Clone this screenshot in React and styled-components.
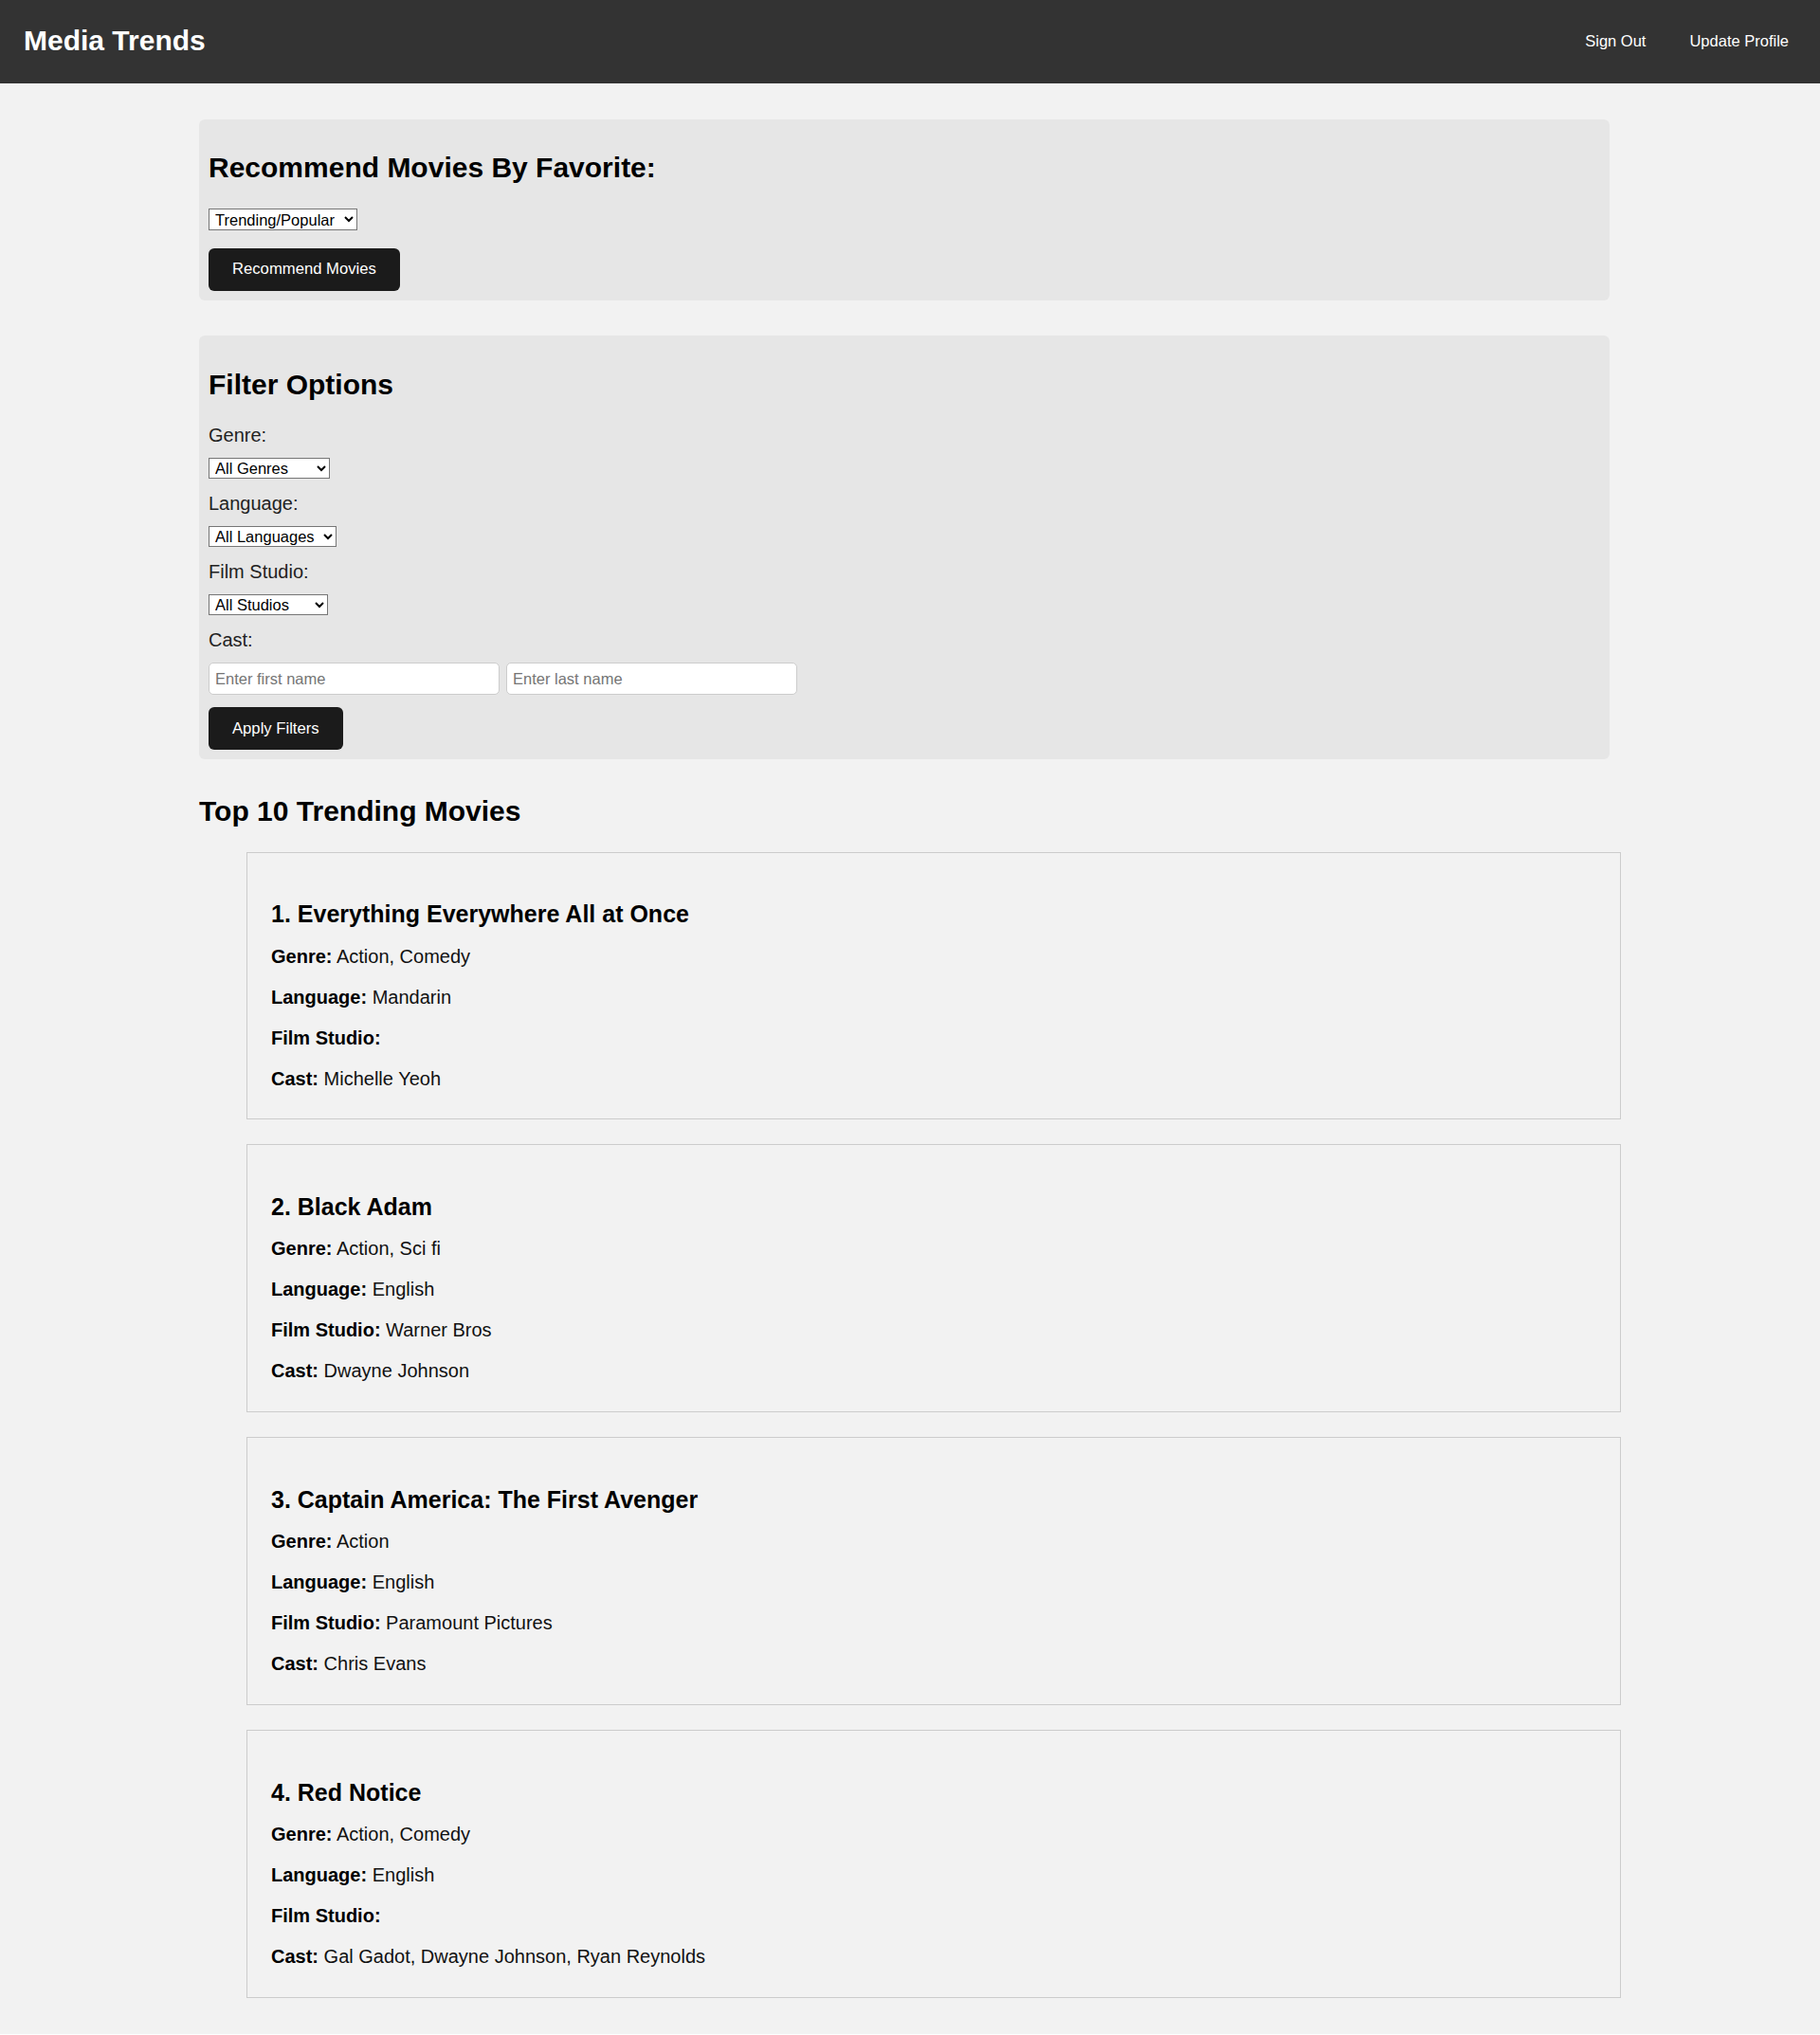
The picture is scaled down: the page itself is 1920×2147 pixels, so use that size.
import styled, { createGlobalStyle } from "styled-components";

const GlobalStyle = createGlobalStyle`
  html {
    background: #fff;
  }
  body {
    margin: 0;
    background: #f2f2f2;
    font-family: "Liberation Sans", Arial, sans-serif;
    color: #000;
  }
`;

const Header = styled.header`
  height: 88px;
  box-sizing: border-box;
  display: flex;
  align-items: center;
  justify-content: space-between;
  padding: 0 33px 2px 25px;
  background: #333;
  color: #fff;
`;

const Brand = styled.h1`
  margin: 0;
  font-size: 30px;
  font-weight: bold;
`;

const Nav = styled.nav`
  display: flex;
  gap: 46px;

  a {
    color: #fff;
    text-decoration: none;
    font-size: 16.5px;
  }
`;

const Main = styled.main`
  max-width: 1500px;
  margin: 0 auto;
  padding-bottom: 12px;
`;

const Panel = styled.section`
  background: #e6e6e6;
  border-radius: 6px;
  padding: 10px;
  margin: 37.5px 12px 37.5px 0;
`;

const Heading = styled.h2`
  margin: 24.5px 0 ${(p) => p.$mb || 25}px;
  font-size: 30px;
  font-weight: bold;
`;

const Label = styled.label`
  display: block;
  font-size: 20px;
  color: #222;
  margin-bottom: 12.5px;
`;

const Select = styled.select`
  display: block;
  width: ${(p) => p.$w}px;
  height: ${(p) => p.$h || 22}px;
  margin: 0 0 ${(p) => p.$mb || 14.5}px;
  padding: 0 2px;
  font-family: "Liberation Sans", Arial, sans-serif;
  font-size: 16.5px;
  color: #000;
  background: #fff;
  border: 1px solid #767676;
  border-radius: 0;
`;

const CastRow = styled.div`
  display: flex;
  gap: 7px;
  margin-bottom: 13px;
`;

const TextInput = styled.input`
  width: 307px;
  height: 34px;
  box-sizing: border-box;
  padding: 0 6px;
  font-family: "Liberation Sans", Arial, sans-serif;
  font-size: 16.5px;
  background: #fff;
  border: 1px solid #ccc;
  border-radius: 5px;

  &::placeholder {
    color: #757575;
  }
`;

const DarkButton = styled.button`
  display: block;
  height: 45px;
  padding: 0 25px;
  font-family: "Liberation Sans", Arial, sans-serif;
  font-size: 16.67px;
  color: #fff;
  background: #1b1b1b;
  border: none;
  border-radius: 6px;
  cursor: pointer;
`;

const MovieList = styled.ul`
  list-style: none;
  margin: 0;
  padding: 0 0 0 50px;
`;

const MovieCard = styled.li`
  background: #f2f2f2;
  border: 1px solid #ccc;
  padding: 25px 25px 30.8px;
  margin-bottom: 26px;
`;

const MovieTitle = styled.h3`
  margin: 25.5px 0 18.6px;
  font-size: 25px;
  font-weight: bold;
`;

const Detail = styled.p`
  margin: 0 0 20px;
  font-size: 20px;
  color: #111;

  &:last-child {
    margin-bottom: 0;
  }

  strong {
    color: #000;
  }
`;

const movies = [
  {
    title: "Everything Everywhere All at Once",
    genre: "Action, Comedy",
    language: "Mandarin",
    studio: "",
    cast: "Michelle Yeoh",
  },
  {
    title: "Black Adam",
    genre: "Action, Sci fi",
    language: "English",
    studio: "Warner Bros",
    cast: "Dwayne Johnson",
  },
  {
    title: "Captain America: The First Avenger",
    genre: "Action",
    language: "English",
    studio: "Paramount Pictures",
    cast: "Chris Evans",
  },
  {
    title: "Red Notice",
    genre: "Action, Comedy",
    language: "English",
    studio: "",
    cast: "Gal Gadot, Dwayne Johnson, Ryan Reynolds",
  },
];

export default function App() {
  return (
    <>
      <GlobalStyle />
      <Header>
        <Brand>Media Trends</Brand>
        <Nav>
          <a href="#">Sign Out</a>
          <a href="#">Update Profile</a>
        </Nav>
      </Header>
      <Main>
        <Panel>
          <Heading $mb={26}>Recommend Movies By Favorite:</Heading>
          <Select $w={157} $h={23} $mb={18.5} defaultValue="trending">
            <option value="trending">Trending/Popular</option>
            <option value="genre">Genre</option>
            <option value="language">Language</option>
          </Select>
          <DarkButton>Recommend Movies</DarkButton>
        </Panel>

        <Panel>
          <Heading>Filter Options</Heading>
          <Label htmlFor="genre">Genre:</Label>
          <Select id="genre" $w={128}>
            <option>All Genres</option>
            <option>Action</option>
            <option>Comedy</option>
            <option>Sci fi</option>
          </Select>
          <Label htmlFor="language">Language:</Label>
          <Select id="language" $w={135}>
            <option>All Languages</option>
            <option>English</option>
            <option>Mandarin</option>
          </Select>
          <Label htmlFor="studio">Film Studio:</Label>
          <Select id="studio" $w={126}>
            <option>All Studios</option>
            <option>Warner Bros</option>
            <option>Paramount</option>
          </Select>
          <Label>Cast:</Label>
          <CastRow>
            <TextInput type="text" placeholder="Enter first name" />
            <TextInput type="text" placeholder="Enter last name" />
          </CastRow>
          <DarkButton>Apply Filters</DarkButton>
        </Panel>

        <Heading $mb={26}>Top 10 Trending Movies</Heading>
        <MovieList>
          {movies.map((m, i) => (
            <MovieCard key={m.title}>
              <MovieTitle>
                {i + 1}. {m.title}
              </MovieTitle>
              <Detail>
                <strong>Genre:</strong> {m.genre}
              </Detail>
              <Detail>
                <strong>Language:</strong> {m.language}
              </Detail>
              <Detail>
                <strong>Film Studio:</strong> {m.studio}
              </Detail>
              <Detail>
                <strong>Cast:</strong> {m.cast}
              </Detail>
            </MovieCard>
          ))}
        </MovieList>
      </Main>
    </>
  );
}
